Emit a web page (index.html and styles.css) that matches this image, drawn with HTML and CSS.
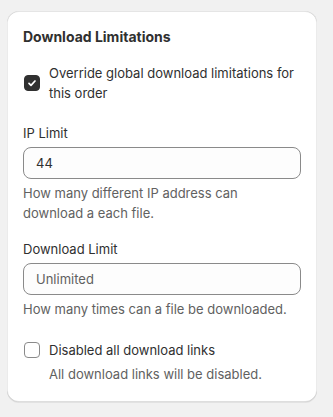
FILE: index.html
```html
<!DOCTYPE html>
<html lang="en">
<head>
  <meta charset="UTF-8" />
  <meta name="viewport" content="width=device-width, initial-scale=1.0" />
  <title>Download Limitations</title>
  <link rel="stylesheet" href="styles.css">
</head>
<body>

  <section class="card">
    <h2 class="card-title">Download Limitations</h2>

    <label class="check check-main">
      <span class="box checked">
        <svg viewBox="0 0 16 16" width="16" height="16"><path d="M5 8.3l2 2 4-4.3" fill="none" stroke="#fff" stroke-width="1.7" stroke-linecap="round" stroke-linejoin="round"/></svg>
      </span>
      <span class="check-text">Override global download limitations for this order</span>
    </label>

    <div class="field">
      <label class="field-label" for="ip-limit">IP Limit</label>
      <input class="input" id="ip-limit" type="text" value="44" />
      <p class="help">How many different IP address can download a each file.</p>
    </div>

    <div class="field">
      <label class="field-label" for="dl-limit">Download Limit</label>
      <input class="input" id="dl-limit" type="text" placeholder="Unlimited" />
      <p class="help">How many times can a file be downloaded.</p>
    </div>

    <label class="check check-last">
      <span class="box"></span>
      <span class="check-text">Disabled all download links</span>
    </label>
    <p class="help help-indent">All download links will be disabled.</p>
  </section>

</body>
</html>
```

FILE: styles.css
```css
:root {
  --bg: #f1f1f1;
  --text: #303030;
  --muted: #616161;
  --border: #8a8a8a;
}

body {
  margin: 0;
  padding: 11px 16px 16px 7px;
  font-family: Inter, "Noto Sans", sans-serif;
  font-size: 13px;
  line-height: 20px;
  background: var(--bg);
  color: var(--text);
}

.card {
  background: #fff;
  border-radius: 12px;
  padding: 16px 16px 18px;
  box-shadow: 0 1px 0 0 rgba(26, 26, 26, 0.07),
    inset 1px 0 0 0 rgba(0, 0, 0, 0.08),
    inset -1px 0 0 0 rgba(0, 0, 0, 0.08),
    inset 0 -1px 0 0 rgba(0, 0, 0, 0.13),
    inset 0 1px 0 0 rgba(204, 204, 204, 0.5);
}

.card-title {
  margin: 0;
  font-size: 14px;
  font-weight: 650;
  line-height: 20px;
}

.check {
  display: flex;
  align-items: center;
  gap: 8px;
  cursor: pointer;
}

.check-main {
  margin-top: 16px;
}

.check-last {
  margin-top: 21px;
}

.box {
  flex: none;
  width: 16px;
  height: 16px;
  margin-left: 1px;
  border: 1px solid var(--border);
  border-radius: 4px;
  box-sizing: border-box;
  background: #fff;
  display: flex;
}

.box.checked {
  background: var(--text);
  border-color: var(--text);
}

.box svg {
  margin: -1px;
}

.check-text {
  margin-left: 1px;
}

.field {
  margin-top: 20px;
}

.field + .field {
  margin-top: 16px;
}

.field-label {
  display: block;
  margin-bottom: 4px;
}

.input {
  display: block;
  width: 100%;
  height: 32px;
  box-sizing: border-box;
  padding: 0 12px;
  border: 1px solid var(--border);
  border-radius: 8px;
  background: #fdfdfd;
  font: inherit;
  color: var(--text);
  outline: none;
}

.input::placeholder {
  color: var(--muted);
}

.help {
  margin: 4px 0 0;
  color: var(--muted);
}

.help-indent {
  padding-left: 26px;
}
```
